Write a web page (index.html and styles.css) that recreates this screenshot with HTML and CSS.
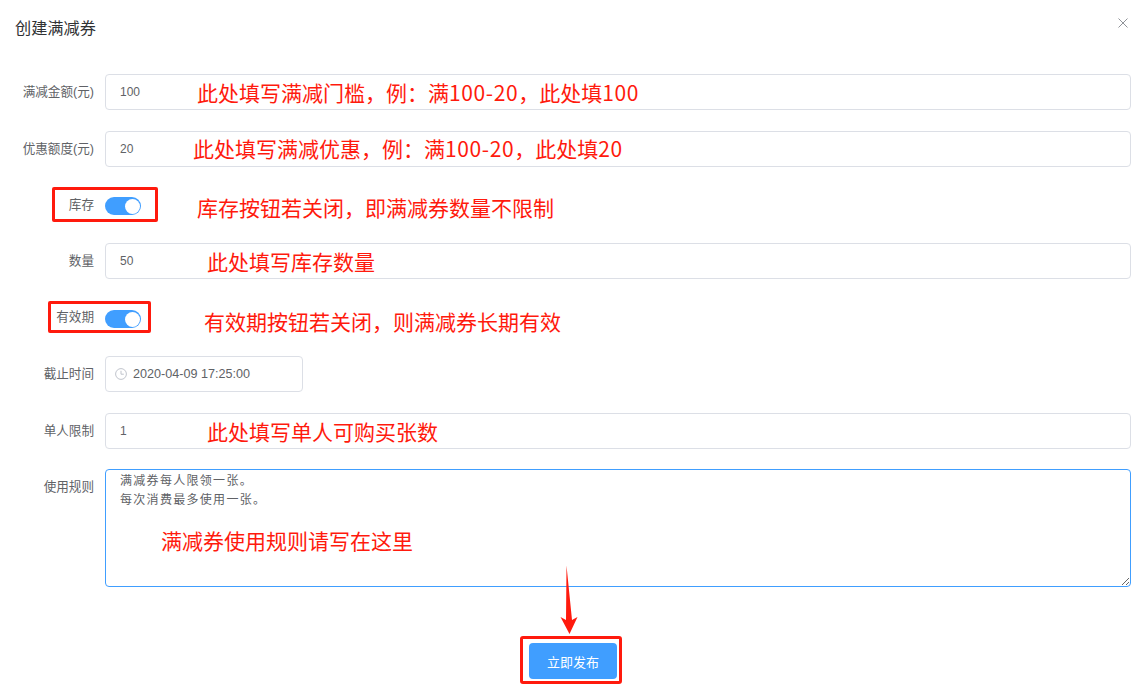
FILE: index.html
```html
<!DOCTYPE html>
<html lang="zh-CN">
<head>
<meta charset="utf-8">
<title>创建满减券</title>
<link rel="stylesheet" href="styles.css">
</head>
<body>
<div class="dialog">
  <header class="dialog-header">
    <h1 class="dialog-title">创建满减券</h1>
    <button class="dialog-close" type="button" aria-label="关闭">
      <svg width="10" height="10" viewBox="0 0 10 10"><path d="M0.5 0.5L9.5 9.5M9.5 0.5L0.5 9.5" stroke="#909399" stroke-width="1" fill="none"/></svg>
    </button>
  </header>
  <form class="form">
    <div class="row">
      <label class="label">满减金额(元)</label>
      <input class="input" type="text" value="100">
      <span class="note note-amount">此处填写满减门槛，例：满<span class="digits">100-20</span>，此处填<span class="digits">100</span></span>
    </div>
    <div class="row">
      <label class="label">优惠额度(元)</label>
      <input class="input" type="text" value="20">
      <span class="note note-discount">此处填写满减优惠，例：满<span class="digits">100-20</span>，此处填<span class="digits">20</span></span>
    </div>
    <div class="row">
      <label class="label label-stock">库存</label>
      <span class="switch"><span class="switch-knob"></span></span>
      <span class="redbox redbox-stock"></span>
      <span class="note note-stock">库存按钮若关闭，即满减券数量不限制</span>
    </div>
    <div class="row row-after-switch">
      <label class="label">数量</label>
      <input class="input" type="text" value="50">
      <span class="note note-count">此处填写库存数量</span>
    </div>
    <div class="row row-switch-loose">
      <label class="label label-valid">有效期</label>
      <span class="switch"><span class="switch-knob"></span></span>
      <span class="redbox redbox-valid"></span>
      <span class="note note-valid">有效期按钮若关闭，则满减券长期有效</span>
    </div>
    <div class="row row-after-switch">
      <label class="label">截止时间</label>
      <div class="date-input">
        <svg class="clock" width="12" height="12" viewBox="0 0 12 12"><circle cx="6" cy="6" r="5.4" fill="none" stroke="#c0c4cc" stroke-width="1"/><path d="M6 2.8V6.2H8.8" fill="none" stroke="#c0c4cc" stroke-width="1"/></svg>
        <span>2020-04-09 17:25:00</span>
      </div>
    </div>
    <div class="row">
      <label class="label">单人限制</label>
      <input class="input" type="text" value="1">
      <span class="note note-limit">此处填写单人可购买张数</span>
    </div>
    <div class="row row-textarea">
      <label class="label label-top">使用规则</label>
      <textarea class="textarea">满减券每人限领一张。
每次消费最多使用一张。</textarea>
      <span class="note note-rules">满减券使用规则请写在这里</span>
    </div>
    <div class="actions">
      <span class="submit-frame"><button class="submit" type="button">立即发布</button></span>
      <svg class="arrow" width="20" height="70" viewBox="0 0 20 70"><path d="M6.5 0.5L12 55L17.5 52L9.5 69L0.5 52L6 55Z" fill="#ff1a0d"/></svg>
    </div>
  </form>
</div>
</body>
</html>
```
FILE: styles.css
```css
* {
  box-sizing: border-box;
}

html,
body {
  margin: 0;
  height: 100%;
  overflow: hidden;
  background: #fff;
}

body {
  font-family: "Liberation Sans", "Noto Sans CJK SC", sans-serif;
  font-size: 12px;
  color: #606266;
}

.dialog {
  display: flex;
  flex-direction: column;
  height: 688px;
}

.dialog-header {
  position: relative;
  height: 74px;
  padding: 18px 15px 0;
}

.dialog-title {
  margin: 0;
  font-size: 16.2px;
  font-weight: 400;
  line-height: 20px;
  color: #303133;
}

.dialog-close {
  position: absolute;
  top: 18px;
  right: 15px;
  display: flex;
  padding: 0;
  border: 0;
  background: none;
}

.form {
  display: flex;
  flex-direction: column;
  padding-right: 12px;
}

.row {
  position: relative;
  display: flex;
  align-items: center;
  gap: 11px;
  min-height: 36px;
  margin-bottom: 21px;
}

.row-after-switch {
  margin-top: -2px;
}

.row-switch-loose {
  margin-top: 1px;
  margin-bottom: 21px;
}

.row-textarea {
  align-items: flex-start;
  margin-top: -1px;
  margin-bottom: 56px;
}

.label {
  flex: 0 0 94px;
  text-align: right;
  font-size: 12.6px;
  color: #606266;
  line-height: 14px;
}

.label-top {
  margin-top: 11px;
}

.label-stock {
  margin-bottom: 2px;
}

.label-valid {
  margin-bottom: 4px;
}

.input {
  flex: 1;
  height: 36px;
  padding: 0 14px;
  border: 1px solid #dcdfe6;
  border-radius: 4px;
  outline: 0;
  background: #fff;
  color: #606266;
  font: inherit;
}

.date-input {
  display: flex;
  align-items: center;
  gap: 6px;
  width: 198px;
  height: 36px;
  padding-left: 9px;
  border: 1px solid #dcdfe6;
  border-radius: 4px;
  font-size: 12.6px;
}

.clock {
  flex: none;
}

.textarea {
  flex: 1;
  display: block;
  height: 118px;
  padding: 2px 14px;
  border: 1px solid #409eff;
  border-radius: 4px;
  outline: 0;
  color: #606266;
  font-family: inherit;
  font-size: 12px;
  line-height: 19px;
  letter-spacing: 1.3px;
  resize: vertical;
}

.switch {
  position: relative;
  display: block;
  width: 36px;
  height: 18px;
  border-radius: 9px;
  background: #409eff;
}

.switch-knob {
  position: absolute;
  top: 1.5px;
  right: 1.5px;
  width: 15px;
  height: 15px;
  border-radius: 50%;
  background: #fff;
}

.note {
  position: absolute;
  font-family: "Noto Sans CJK SC", sans-serif;
  font-size: 21px;
  line-height: 28px;
  color: #ff1a0d;
  white-space: nowrap;
}

.digits {
  letter-spacing: 0.6px;
}

.note-amount {
  left: 197px;
  top: 4px;
}

.note-discount {
  left: 193px;
  top: 3px;
}

.note-stock {
  left: 197px;
  top: 5px;
}

.note-count {
  left: 207px;
  top: 4px;
}

.note-valid {
  left: 204px;
  top: 6px;
}

.note-limit {
  left: 207px;
  top: 4px;
}

.note-rules {
  left: 161px;
  top: 57px;
}

.redbox {
  position: absolute;
  border: 3px solid #ff1a0d;
  border-radius: 2px;
}

.redbox-stock {
  left: 52px;
  top: -1px;
  width: 106px;
  height: 35px;
}

.redbox-valid {
  left: 48px;
  top: 0;
  width: 103px;
  height: 32px;
}

.actions {
  position: relative;
  display: flex;
  justify-content: center;
  padding-left: 11px;
  margin-top: -7px;
}

.submit-frame {
  display: block;
  padding: 4px 2px 2px 6px;
  border: 3px solid #ff1a0d;
  border-radius: 3px;
}

.submit {
  display: block;
  width: 88px;
  height: 36px;
  padding: 0;
  border: 0;
  border-radius: 4px;
  background: #409eff;
  color: #fff;
  font-family: inherit;
  font-size: 13px;
}

.arrow {
  position: absolute;
  left: 560px;
  top: -71px;
}
```
